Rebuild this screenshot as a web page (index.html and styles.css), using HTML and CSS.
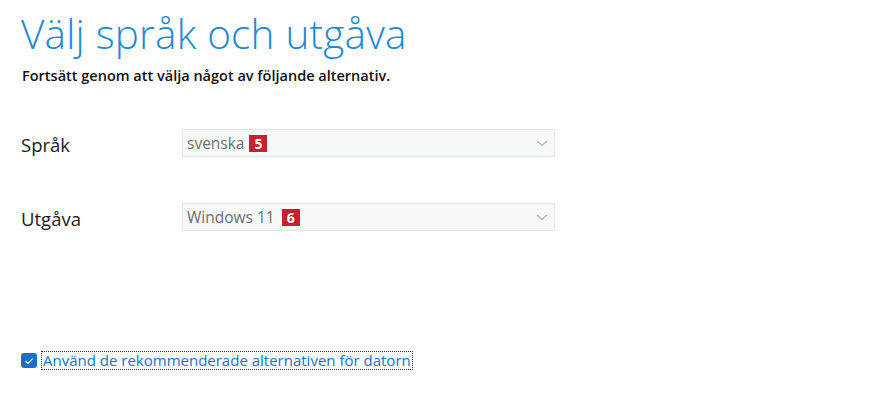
FILE: index.html
```html
<!DOCTYPE html>
<html lang="sv">
<head>
    <meta charset="UTF-8">
    <meta name="viewport" content="width=device-width, initial-scale=1.0">
    <title>Välj språk och utgåva</title>
    <link rel="stylesheet" href="styles.css">
</head>
<body>
    <div class="page">
        <h1 class="title">Välj språk och utgåva</h1>
        <p class="subtitle">Fortsätt genom att välja något av följande alternativ.</p>

        <div class="fields">
            <div class="field">
                <div class="field-label">Språk</div>
                <div class="select">
                    <span class="select-value">svenska</span>
                    <span class="badge">5</span>
                    <svg class="chevron" width="12" height="7" viewBox="0 0 12 7">
                        <path d="M1 1 L6 5.5 L11 1" fill="none" stroke="#b4b4b4" stroke-width="1.2"/>
                    </svg>
                </div>
            </div>
            <div class="field">
                <div class="field-label">Utgåva</div>
                <div class="select">
                    <span class="select-value">Windows 11</span>
                    <span class="badge badge-wide">6</span>
                    <svg class="chevron" width="12" height="7" viewBox="0 0 12 7">
                        <path d="M1 1 L6 5.5 L11 1" fill="none" stroke="#b4b4b4" stroke-width="1.2"/>
                    </svg>
                </div>
            </div>
        </div>

        <label class="option">
            <span class="checkbox">
                <svg width="10" height="8" viewBox="0 0 10 8">
                    <path d="M1.5 4.2 L4 6.4 L8.6 1.6" fill="none" stroke="#ffffff" stroke-width="1.3"/>
                </svg>
            </span>
            <span class="option-text">Använd de rekommenderade alternativen för datorn</span>
        </label>
    </div>
</body>
</html>
```

FILE: styles.css
```css
body {
    margin: 0;
    background-color: #ffffff;
    font-family: "Open Sans", "Noto Sans", Arial, sans-serif;
    color: #1a1a1a;
}
.page {
    padding: 8px 0 0 21px;
}
.title {
    margin: 0;
    font-size: 40.5px;
    font-weight: 300;
    line-height: 52px;
    color: #1f8ad2;
    letter-spacing: 0.2px;
}
.subtitle {
    margin: 7px 0 0 1px;
    font-size: 14.5px;
    font-weight: 600;
    line-height: 18px;
    color: #111111;
}
.fields {
    margin-top: 44px;
    display: flex;
    flex-direction: column;
    gap: 46px;
}
.field {
    display: flex;
    align-items: center;
}
.field-label {
    width: 161px;
    font-size: 18.5px;
    line-height: 24px;
    padding-top: 3px;
    color: #1a1a1a;
}
.select {
    width: 367px;
    height: 26px;
    border: 1px solid #e4e4e4;
    background-color: #f7f8f8;
    display: flex;
    align-items: center;
    padding-left: 4px;
    position: relative;
}
.select-value {
    font-size: 15.5px;
    color: #6e6e70;
}
.badge {
    margin-left: 5px;
    width: 18px;
    height: 17px;
    background-color: #c8202e;
    color: #ffffff;
    font-weight: 700;
    font-size: 14px;
    line-height: 17px;
    text-align: center;
}
.badge-wide {
    margin-left: 7px;
}
.chevron {
    position: absolute;
    right: 6px;
    top: 10px;
}
.option {
    margin-top: 120px;
    display: flex;
    align-items: center;
    gap: 4px;
}
.checkbox {
    width: 16px;
    height: 15px;
    border-radius: 3px;
    background-color: #1a6ec4;
    display: flex;
    align-items: center;
    justify-content: center;
}
.option-text {
    border: 1px dotted #333333;
    padding: 0 1px;
    font-size: 15px;
    line-height: 17px;
    color: #1772c9;
}
```
